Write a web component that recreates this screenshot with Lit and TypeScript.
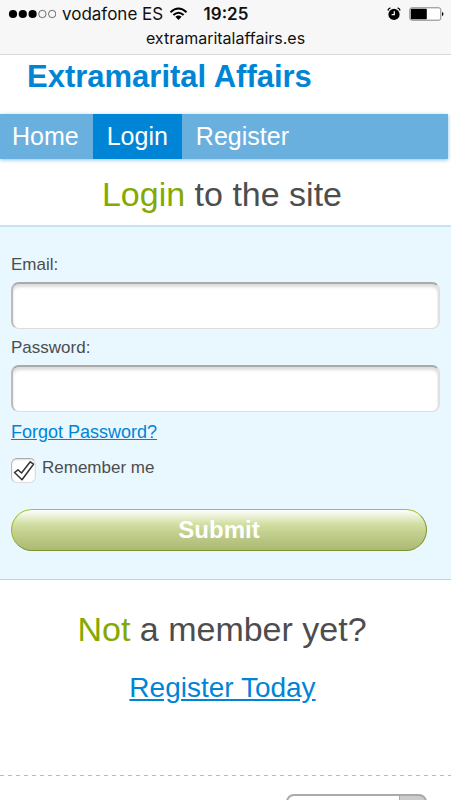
import { LitElement, html, css, svg } from "lit";
import { customElement, state } from "lit/decorators.js";

@customElement("phone-status")
class PhoneStatus extends LitElement {
  static styles = css`
    :host {
      display: block;
      flex: none;
      height: 55px;
      border-bottom: 1px solid #d9d9d9;
      background: #f7f7f7;
      color: #111;
      font-family: Inter, "Liberation Sans", sans-serif;
    }
    .bar {
      display: grid;
      grid-template-columns: 1fr auto 1fr;
      align-items: center;
      height: 28px;
      padding: 0 7px 0 8px;
    }
    .carrier {
      display: flex;
      align-items: center;
      gap: 6px;
      font-size: 17px;
      white-space: nowrap;
    }
    .time {
      font-size: 17px;
      font-weight: 600;
    }
    .right {
      display: flex;
      align-items: center;
      justify-content: flex-end;
      gap: 8px;
    }
    .url {
      text-align: center;
      font-size: 16px;
      line-height: 20px;
    }
    svg {
      display: block;
      flex: none;
    }
  `;

  render() {
    return html`
      <div class="bar">
        <div class="carrier">
          <svg width="48" height="12" viewBox="0 0 48 12" aria-hidden="true">
            ${[0, 1, 2, 3, 4].map((i) =>
              i < 3
                ? svg`<circle cx=${5 + i * 9.8} cy="6" r="4.1" fill="#000" />`
                : svg`<circle cx=${5 + i * 9.8} cy="6" r="3.7" fill="none" stroke="#333" stroke-width=".7" />`
            )}
          </svg>
          <span>vodafone ES</span>
          <svg width="19" height="14" viewBox="0 0 19 14" fill="none" stroke="#000" stroke-width="2" aria-hidden="true">
            <path d="M1.5 5.2Q9.5-2.2 17.5 5.2M4.4 8.1Q9.5 3.5 14.6 8.1" />
            <path d="M6.4 9.8Q9.5 7.2 12.6 9.8L9.5 13Z" fill="#000" stroke="none" />
          </svg>
        </div>
        <span class="time">19:25</span>
        <div class="right">
          <svg width="14" height="14" viewBox="0 0 14 14" fill="none" stroke="#000" aria-hidden="true">
            <circle cx="7" cy="7.4" r="5.6" fill="#000" stroke="none" />
            <path d="M.9 3.5Q1.3 1.6 3.4.9M10.6.9Q12.7 1.6 13.1 3.5" stroke-width="1.3" />
            <path d="M7.3 4.2V7.7H4.6" stroke="#f7f7f7" stroke-width="1.3" />
          </svg>
          <svg width="35" height="14" viewBox="0 0 35 14" aria-hidden="true">
            <rect x=".8" y=".8" width="31" height="12.4" rx="2" fill="#fff" stroke="#777" stroke-width=".9" />
            <rect x="1.8" y="1.8" width="16" height="10.4" rx=".6" fill="#000" />
            <path d="M33 5Q34.5 5.3 34.5 7T33 9Z" fill="#000" />
          </svg>
        </div>
      </div>
      <div class="url">extramaritalaffairs.es</div>
    `;
  }
}

@customElement("app-root")
class AppRoot extends LitElement {
  @state() private remember = true;

  static styles = css`
    :host {
      display: flex;
      flex-direction: column;
      height: 100vh;
      overflow-y: auto;
      scrollbar-width: none;
      background: #fff;
      color: #4d4d4d;
      font-family: "Liberation Sans", Arial, sans-serif;
    }
    * {
      box-sizing: border-box;
    }
    header,
    main,
    footer {
      flex: none;
    }
    h1,
    h2 {
      margin: 0;
    }
    a {
      color: #0085d6;
    }
    h1 {
      padding: 4px 27px 19px;
      font-size: 31px;
      line-height: 36px;
      color: #0085d6;
    }
    nav {
      display: flex;
      margin-right: 3px;
      background: #69b0df;
      box-shadow: 0 1px 4px #8ac6ec;
    }
    nav a {
      padding: 0 14px;
      font-size: 25px;
      line-height: 45px;
      color: #fff;
      text-decoration: none;
    }
    nav a:first-child {
      padding-left: 12px;
    }
    nav a[aria-current] {
      background: #0085d6;
    }
    h2 {
      padding-right: 7px;
      font-size: 34px;
      font-weight: 400;
      line-height: 40px;
      text-align: center;
    }
    .accent {
      color: #84a900;
    }
    .login-title {
      padding-top: 15px;
      padding-bottom: 11px;
    }
    form {
      display: flex;
      flex-direction: column;
      padding: 28px 11px;
      border-top: 2px solid #c5e4f3;
      border-bottom: 1px solid #b5d5e8;
      background: #e9f7ff;
      font-size: 17px;
      line-height: 20px;
    }
    .field {
      width: 100%;
      height: 47px;
      margin: 7px 0 9px;
      padding: 0 10px;
      border: 2px solid;
      border-color: #aaa #e0e0e0 #ddd #bbb;
      border-bottom-width: 1px;
      border-radius: 8px;
      background: #fff;
      box-shadow: inset 0 3px 3px #ddd;
      font: inherit;
    }
    .forgot {
      align-self: flex-start;
      font-size: 18px;
      line-height: 22px;
    }
    .remember {
      display: flex;
      gap: 6px;
      align-self: flex-start;
      margin-top: 15px;
    }
    .box {
      display: grid;
    }
    .box > * {
      grid-area: 1 / 1;
    }
    .box input {
      appearance: none;
      width: 25px;
      height: 25px;
      margin: 0;
      border: 1px solid;
      border-color: #aaa #ddd #ddd #bbb;
      border-radius: 6px;
      background: #fff;
      box-shadow: inset 0 1px 2px #ddd;
    }
    .box svg {
      pointer-events: none;
    }
    .submit {
      height: 42px;
      margin: 26px 13px 0 0;
      padding: 0;
      border: 1px solid;
      border-color: #9fc52e #7a9420 #7a9430 #96b91a;
      border-radius: 21px;
      background: linear-gradient(#fff, #d2dfa2 35%, #c4d08f 55%, #acba75);
      color: #fff;
      font: bold 24px / 36px "Liberation Sans", Arial, sans-serif;
    }
    .join {
      padding: 29px 0 70px;
      text-align: center;
    }
    .join p {
      margin: 22px 6px 0 0;
      font-size: 28px;
      line-height: 34px;
    }
    .dashes {
      flex: none;
      height: 1px;
      background: repeating-linear-gradient(90deg, #bbb 0 4px, transparent 4px 8px);
    }
    footer {
      display: flex;
      justify-content: flex-end;
      padding: 18px 24px 18px 0;
    }
    .picker {
      display: grid;
      width: 141px;
      height: 40px;
      overflow: hidden;
      border: 2px solid #aaa;
      border-radius: 8px;
      background: linear-gradient(90deg, #fff 111px, #aaa 111px 112px, #ccc 112px);
    }
    select {
      appearance: none;
      border: 0;
      background: none;
      font: inherit;
    }
  `;

  render() {
    return html`
      <phone-status></phone-status>
      <header>
        <h1>Extramarital Affairs</h1>
        <nav>
          <a href="#home">Home</a>
          <a href="#login" aria-current="page">Login</a>
          <a href="#register">Register</a>
        </nav>
      </header>
      <main>
        <h2 class="login-title"><span class="accent">Login</span> to the site</h2>
        <form @submit=${(e: Event) => e.preventDefault()}>
          <label for="email">Email:</label>
          <input class="field" id="email" type="email" />
          <label for="password">Password:</label>
          <input class="field" id="password" type="password" />
          <a class="forgot" href="#forgot">Forgot Password?</a>
          <label class="remember">
            <span class="box">
              <input
                type="checkbox"
                .checked=${this.remember}
                @change=${(e: Event) => (this.remember = (e.target as HTMLInputElement).checked)}
              />
              ${this.remember
                ? html`<svg width="25" height="25" viewBox="0 0 25 25" aria-hidden="true">
                    <path
                      d="M3.5 14.5L7 11.8L10.5 15L19.3 3.8L22.5 6.2L11 21.8Z"
                      fill="#fff"
                      stroke="#333"
                      stroke-width="1.5"
                      stroke-linejoin="round"
                    />
                  </svg>`
                : null}
            </span>
            <span>Remember me</span>
          </label>
          <button class="submit" type="submit">Submit</button>
        </form>
        <section class="join">
          <h2><span class="accent">Not</span> a member yet?</h2>
          <p><a href="#register">Register Today</a></p>
        </section>
      </main>
      <div class="dashes"></div>
      <footer>
        <div class="picker">
          <select aria-label="Language">
            <option></option>
          </select>
        </div>
      </footer>
    `;
  }
}
